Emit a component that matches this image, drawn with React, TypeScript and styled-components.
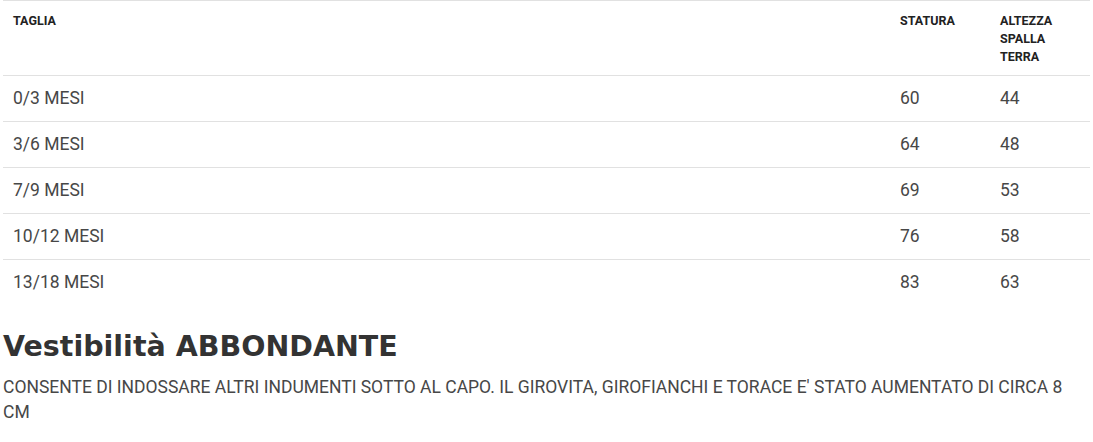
import styled, { createGlobalStyle } from 'styled-components'

const GlobalStyle = createGlobalStyle`
  body {
    margin: 0;
    background: #ffffff;
    font-family: Roboto, "Liberation Sans", Arial, sans-serif;
    color: #333333;
  }
`

const Page = styled.div`
  padding: 0 3px;
`

const SizeTable = styled.table`
  width: 100%;
  border-collapse: collapse;
  table-layout: fixed;
  border-top: 1px solid #e1e1e1;
`

const HeadCell = styled.th<{ $w?: number }>`
  box-sizing: border-box;
  width: ${p => (p.$w ? `${p.$w}px` : 'auto')};
  text-align: left;
  vertical-align: top;
  padding: 11px 10px 9px;
  font-size: 12.5px;
  line-height: 18px;
  font-weight: 700;
  text-transform: uppercase;
  color: #222;
`

const Row = styled.tr`
  border-top: 1px solid #e1e1e1;
`

const Cell = styled.td`
  padding: 10px 10px;
  font-size: 17.5px;
  line-height: 25px;
  color: #474747;
`

const Title = styled.h2`
  margin: 25px 0 0;
  font-family: "DejaVu Sans", "Open Sans", sans-serif;
  font-weight: 700;
  font-size: 28.5px;
  line-height: 1.2;
  color: #333;
`

const Note = styled.p`
  margin: 11px 0 0;
  font-size: 17.5px;
  line-height: 25px;
  color: #474747;
  text-transform: uppercase;
`

const rows = [
  ['0/3 MESI', '60', '44'],
  ['3/6 MESI', '64', '48'],
  ['7/9 MESI', '69', '53'],
  ['10/12 MESI', '76', '58'],
  ['13/18 MESI', '83', '63'],
]

export default function App() {
  return (
    <Page>
      <GlobalStyle />
      <SizeTable>
        <thead>
          <tr>
            <HeadCell>Taglia</HeadCell>
            <HeadCell $w={100}>Statura</HeadCell>
            <HeadCell $w={100}>Altezza spalla terra</HeadCell>
          </tr>
        </thead>
        <tbody>
          {rows.map(r => (
            <Row key={r[0]}>
              <Cell>{r[0]}</Cell>
              <Cell>{r[1]}</Cell>
              <Cell>{r[2]}</Cell>
            </Row>
          ))}
        </tbody>
      </SizeTable>
      <Title>Vestibilità ABBONDANTE</Title>
      <Note>
        CONSENTE DI INDOSSARE ALTRI INDUMENTI SOTTO AL CAPO. IL GIROVITA, GIROFIANCHI E TORACE E' STATO AUMENTATO DI CIRCA 8 CM
      </Note>
    </Page>
  )
}
